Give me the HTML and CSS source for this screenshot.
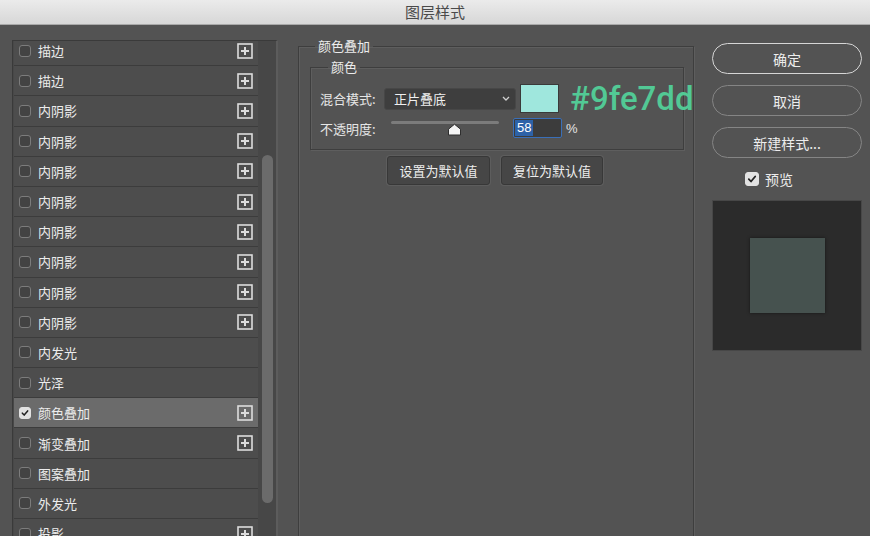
FILE: index.html
```html
<!DOCTYPE html>
<html lang="zh-CN">
<head>
    <meta charset="UTF-8">
    <meta name="viewport" content="width=device-width, initial-scale=1.0">
    <title>图层样式</title>
    <link rel="stylesheet" href="styles.css">
</head>
<body>
    <div class="window">
        <div class="titlebar">图层样式</div>

        <div class="main">
            <!-- style list -->
            <div class="style-panel">
                <div class="style-viewport">
                    <ul class="style-list">
                        <li class="style-row"><span class="check"></span><span class="style-name">描边</span><span class="add-btn"><svg viewBox="0 0 16 16"><rect x="1" y="1" width="14" height="14"/><path d="M8 4v8M4 8h8"/></svg></span></li>
                        <li class="style-row"><span class="check"></span><span class="style-name">描边</span><span class="add-btn"><svg viewBox="0 0 16 16"><rect x="1" y="1" width="14" height="14"/><path d="M8 4v8M4 8h8"/></svg></span></li>
                        <li class="style-row"><span class="check"></span><span class="style-name">内阴影</span><span class="add-btn"><svg viewBox="0 0 16 16"><rect x="1" y="1" width="14" height="14"/><path d="M8 4v8M4 8h8"/></svg></span></li>
                        <li class="style-row"><span class="check"></span><span class="style-name">内阴影</span><span class="add-btn"><svg viewBox="0 0 16 16"><rect x="1" y="1" width="14" height="14"/><path d="M8 4v8M4 8h8"/></svg></span></li>
                        <li class="style-row"><span class="check"></span><span class="style-name">内阴影</span><span class="add-btn"><svg viewBox="0 0 16 16"><rect x="1" y="1" width="14" height="14"/><path d="M8 4v8M4 8h8"/></svg></span></li>
                        <li class="style-row"><span class="check"></span><span class="style-name">内阴影</span><span class="add-btn"><svg viewBox="0 0 16 16"><rect x="1" y="1" width="14" height="14"/><path d="M8 4v8M4 8h8"/></svg></span></li>
                        <li class="style-row"><span class="check"></span><span class="style-name">内阴影</span><span class="add-btn"><svg viewBox="0 0 16 16"><rect x="1" y="1" width="14" height="14"/><path d="M8 4v8M4 8h8"/></svg></span></li>
                        <li class="style-row"><span class="check"></span><span class="style-name">内阴影</span><span class="add-btn"><svg viewBox="0 0 16 16"><rect x="1" y="1" width="14" height="14"/><path d="M8 4v8M4 8h8"/></svg></span></li>
                        <li class="style-row"><span class="check"></span><span class="style-name">内阴影</span><span class="add-btn"><svg viewBox="0 0 16 16"><rect x="1" y="1" width="14" height="14"/><path d="M8 4v8M4 8h8"/></svg></span></li>
                        <li class="style-row"><span class="check"></span><span class="style-name">内阴影</span><span class="add-btn"><svg viewBox="0 0 16 16"><rect x="1" y="1" width="14" height="14"/><path d="M8 4v8M4 8h8"/></svg></span></li>
                        <li class="style-row"><span class="check"></span><span class="style-name">内发光</span></li>
                        <li class="style-row"><span class="check"></span><span class="style-name">光泽</span></li>
                        <li class="style-row selected"><span class="check checked"><svg viewBox="0 0 12 12"><path d="M2.8 6.2l2.2 2.3 4.2-5"/></svg></span><span class="style-name">颜色叠加</span><span class="add-btn"><svg viewBox="0 0 16 16"><rect x="1" y="1" width="14" height="14"/><path d="M8 4v8M4 8h8"/></svg></span></li>
                        <li class="style-row"><span class="check"></span><span class="style-name">渐变叠加</span><span class="add-btn"><svg viewBox="0 0 16 16"><rect x="1" y="1" width="14" height="14"/><path d="M8 4v8M4 8h8"/></svg></span></li>
                        <li class="style-row"><span class="check"></span><span class="style-name">图案叠加</span></li>
                        <li class="style-row"><span class="check"></span><span class="style-name">外发光</span></li>
                        <li class="style-row"><span class="check"></span><span class="style-name">投影</span><span class="add-btn"><svg viewBox="0 0 16 16"><rect x="1" y="1" width="14" height="14"/><path d="M8 4v8M4 8h8"/></svg></span></li>
                    </ul>
                </div>
                <div class="scroll-track">
                    <div class="scroll-thumb"></div>
                </div>
            </div>

            <!-- settings -->
            <fieldset class="group outer">
                <legend>颜色叠加</legend>

                <fieldset class="group inner">
                    <legend>颜色</legend>

                    <div class="field-row blend-row">
                        <span class="field-label">混合模式:</span>
                        <div class="select">
                            <span>正片叠底</span>
                            <svg class="chevron" viewBox="0 0 8 5"><path d="M1 1l3 3 3-3"/></svg>
                        </div>
                        <div class="swatch"></div>
                        <span class="hex">#9fe7dd</span>
                    </div>

                    <div class="field-row opacity-row">
                        <span class="field-label">不透明度:</span>
                        <div class="slider">
                            <div class="slider-track"></div>
                            <svg class="slider-thumb" style="left: 58%" viewBox="0 0 15 13"><path d="M7.5 1.2L13.5 6.2V12H1.5V6.2Z"/></svg>
                        </div>
                        <div class="num-input"><span class="sel">58</span></div>
                        <span class="unit">%</span>
                    </div>
                </fieldset>

                <div class="default-btns">
                    <button class="plain-btn">设置为默认值</button>
                    <button class="plain-btn">复位为默认值</button>
                </div>
            </fieldset>

            <!-- actions -->
            <div class="actions">
                <button class="pill-btn primary">确定</button>
                <button class="pill-btn">取消</button>
                <button class="pill-btn">新建样式...</button>

                <label class="preview-check">
                    <span class="check checked"><svg viewBox="0 0 12 12"><path d="M2.8 6.2l2.2 2.3 4.2-5"/></svg></span>
                    预览
                </label>

                <div class="preview">
                    <div class="preview-square"></div>
                </div>
            </div>
        </div>
    </div>
</body>
</html>
```

FILE: styles.css
```css
body {
    margin: 0;
    background-color: #535353;
    font-family: "Noto Sans CJK SC", "Liberation Sans", sans-serif;
    font-size: 13px;
    color: #e4e4e4;
    overflow: hidden;
}
.window {
    width: 870px;
    height: 536px;
    display: flex;
    flex-direction: column;
    overflow: hidden;
}
.titlebar {
    height: 25px;
    flex-shrink: 0;
    box-sizing: border-box;
    background: linear-gradient(#ebebeb, #d7d7d7);
    border-bottom: 1px solid #a9a9a9;
    color: #4a4a4a;
    font-size: 15px;
    line-height: 24px;
    text-align: center;
}
.main {
    flex: 1;
    display: flex;
    align-items: flex-start;
    padding: 12px 0 0 12px;
}

/* left list */
.style-panel {
    width: 266px;
    height: 520px;
    margin-top: 3px;
    flex-shrink: 0;
    display: flex;
    box-sizing: border-box;
    background-color: #484848;
    border-top: 1px solid #3a3a3a;
    border-left: 1px solid #3a3a3a;
    border-right: 2px solid #5c5c5c;
}
.style-viewport {
    width: 245px;
    padding-left: 1px;
    overflow: hidden;
}
.style-list {
    list-style: none;
    margin: -5px 0 0;
    padding: 0;
}
.style-row {
    height: 30.2px;
    box-sizing: border-box;
    display: flex;
    align-items: center;
    padding: 0 5px 0 5px;
    background-color: #4d4d4d;
    border-bottom: 1.5px solid #3c3c3c;
}
.style-row.selected {
    background-color: #6b6b6b;
}
.check {
    width: 12px;
    height: 12px;
    box-sizing: border-box;
    border: 1px solid #7c7c7c;
    border-radius: 3px;
    background-color: #434343;
    flex-shrink: 0;
    display: flex;
}
.check svg {
    width: 100%;
    height: 100%;
}
.check.checked {
    background-color: #e2e2e2;
    border-color: #e2e2e2;
}
.check.checked path {
    fill: none;
    stroke: #222;
    stroke-width: 1.8;
    stroke-linecap: round;
    stroke-linejoin: round;
}
.style-name {
    margin-left: 7px;
    flex: 1;
    color: #ececec;
}
.add-btn {
    width: 16px;
    height: 16px;
    display: flex;
}
.add-btn svg {
    width: 16px;
    height: 16px;
}
.add-btn rect,
.add-btn path {
    fill: none;
    stroke: #dcdcdc;
    stroke-width: 1.6;
}
.add-btn path {
    stroke-width: 2;
}
.scroll-track {
    width: 18px;
    background-color: #474747;
    padding-top: 114px;
}
.scroll-thumb {
    width: 11px;
    height: 348px;
    margin-left: 4px;
    border-radius: 6px;
    background-color: #6b6b6b;
}

/* fieldsets */
.group {
    margin: 0;
    min-width: 0;
    border: 1px solid #3e3e3e;
    box-shadow: 1px 1px 0 #5e5e5e, inset 1px 1px 0 #5e5e5e;
}
.group legend {
    padding: 0 3px;
    line-height: 18px;
    color: #ececec;
}
.outer {
    width: 396px;
    height: 520px;
    box-sizing: border-box;
    margin-left: 20px;
    padding: 0 9px 0 11px;
    flex-shrink: 0;
}
.outer > legend {
    margin-left: 5px;
}
.inner {
    margin-top: 3px;
    padding: 0 9px 11px 9px;
}
.inner > legend {
    margin-left: 8px;
}
.field-row {
    display: flex;
    align-items: center;
}
.blend-row {
    margin-top: 8px;
    height: 29px;
}
.opacity-row {
    margin-top: 5px;
    height: 20px;
}
.field-label {
    width: 64px;
    flex-shrink: 0;
    color: #e6e6e6;
}
.select {
    width: 132px;
    height: 22px;
    flex-shrink: 0;
    box-sizing: border-box;
    display: flex;
    align-items: center;
    justify-content: space-between;
    padding: 0 5px 0 9px;
    background-color: #3e3e3e;
    border: 1px solid #474747;
    border-radius: 3px;
    color: #f0f0f0;
}
.chevron {
    width: 8px;
    height: 5px;
}
.chevron path {
    fill: none;
    stroke: #cfcfcf;
    stroke-width: 1.3;
}
.swatch {
    width: 39px;
    height: 29px;
    box-sizing: border-box;
    margin-left: 4px;
    background-color: #9fe7dd;
    border: 1px solid #3a3a3a;
    flex-shrink: 0;
}
.hex {
    margin-left: 11px;
    font-family: Roboto, "Liberation Sans", sans-serif;
    font-weight: 500;
    font-size: 33px;
    line-height: 29px;
    color: #52c995;
    white-space: nowrap;
}
.slider {
    position: relative;
    width: 108px;
    height: 20px;
    margin-left: 7px;
    flex-shrink: 0;
}
.slider-track {
    margin-top: 3px;
    height: 3px;
    border-radius: 2px;
    background-color: #7c7c7c;
}
.slider-thumb {
    position: absolute;
    top: 5px;
    width: 15px;
    height: 13px;
    margin-left: -7px;
}
.slider-thumb path {
    fill: #f4f4f4;
    stroke: #2e2e2e;
    stroke-width: 1;
    stroke-linejoin: round;
}
.num-input {
    width: 49px;
    height: 20px;
    flex-shrink: 0;
    box-sizing: border-box;
    margin-left: 14px;
    padding: 1px;
    background-color: #3c3c3c;
    border: 1.5px solid #3a6fb8;
    border-radius: 2px;
    display: flex;
}
.num-input .sel {
    background-color: #2d62a8;
    color: #fff;
    padding: 0 2px;
    font-family: "Liberation Sans", sans-serif;
    font-size: 13px;
    line-height: 15px;
}
.unit {
    margin-left: 4px;
    font-family: "Liberation Sans", sans-serif;
}
.default-btns {
    display: flex;
    justify-content: center;
    gap: 11px;
    margin-top: 6px;
    padding-right: 4px;
}
.plain-btn {
    width: 103px;
    height: 29px;
    background-color: #464646;
    border: 1px solid #383838;
    border-radius: 3px;
    box-shadow: 0 0 0 1px #5d5d5d;
    font-family: inherit;
    font-size: 13px;
    color: #ededed;
    padding: 0;
}
.plain-btn + .plain-btn {
    width: 102px;
}

/* right column */
.actions {
    width: 150px;
    margin-left: 18px;
    margin-top: 6px;
    display: flex;
    flex-direction: column;
    flex-shrink: 0;
}
.pill-btn {
    height: 31px;
    margin-bottom: 11px;
    background: transparent;
    border: 1.5px solid #858585;
    border-radius: 16px;
    font-family: inherit;
    font-size: 14px;
    color: #ededed;
    padding: 0;
}
.pill-btn.primary {
    border-color: #d6d6d6;
}
.preview-check {
    display: flex;
    align-items: center;
    margin-top: 3px;
    padding-left: 33px;
    font-size: 14px;
    color: #ececec;
    height: 14px;
}
.preview-check .check {
    width: 14px;
    height: 14px;
    margin-right: 6px;
}
.preview {
    margin-top: 14px;
    height: 151px;
    box-sizing: border-box;
    background-color: #2b2b2b;
    border: 1px solid #474747;
    display: flex;
    align-items: center;
    justify-content: center;
}
.preview-square {
    width: 75px;
    height: 75px;
    background-color: #46524f;
    box-shadow: 0 0 3px rgba(0, 0, 0, 0.5);
}
```
